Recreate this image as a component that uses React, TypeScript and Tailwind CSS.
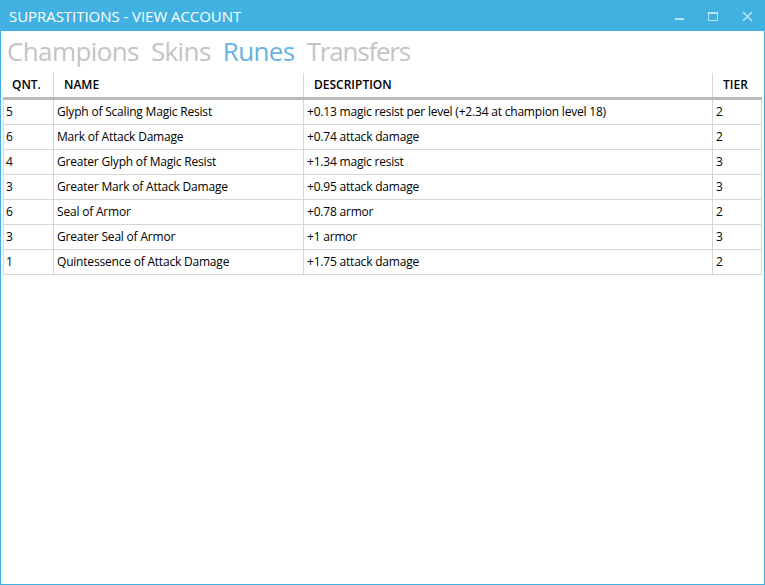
import React from "react";

const rows = [
  ["5", "Glyph of Scaling Magic Resist", "+0.13 magic resist per level (+2.34 at champion level 18)", "2"],
  ["6", "Mark of Attack Damage", "+0.74 attack damage", "2"],
  ["4", "Greater Glyph of Magic Resist", "+1.34 magic resist", "3"],
  ["3", "Greater Mark of Attack Damage", "+0.95 attack damage", "3"],
  ["6", "Seal of Armor", "+0.78 armor", "2"],
  ["3", "Greater Seal of Armor", "+1 armor", "3"],
  ["1", "Quintessence of Attack Damage", "+1.75 attack damage", "2"],
];

export default function App() {
  return (
    <div
      className="w-[765px] h-[585px] flex flex-col border border-[#41b1e1] bg-white overflow-hidden"
      style={{ fontFamily: '"Open Sans", "Noto Sans", sans-serif' }}
    >
      <div className="h-[30px] shrink-0 bg-[#41b1e1] flex items-center pl-[8px] text-white">
        <span className="text-[15px] tracking-[-0.05px] leading-none">SUPRASTITIONS - VIEW ACCOUNT</span>
        <div className="ml-auto flex items-center h-full">
          <div className="w-[34px] h-full flex items-center justify-center">
            <div className="w-[9px] h-[2px] bg-[#b9e2f5] mt-[6px]" />
          </div>
          <div className="w-[34px] h-full flex items-center justify-center">
            <div className="w-[10px] h-[9px] border border-[#b9e2f5] border-t-2" />
          </div>
          <div className="w-[34px] h-full flex items-center justify-center">
            <svg width="11" height="11" viewBox="0 0 11 11">
              <path d="M1 1 L10 10 M10 1 L1 10" stroke="#b9e2f5" strokeWidth="1.6" />
            </svg>
          </div>
        </div>
      </div>
      <div className="flex gap-[12px] pl-[6px] h-[41px] items-center text-[26px] leading-none tracking-[-0.6px] mt-[-1px]">
        <span className="text-[#c4c4c4]">Champions</span>
        <span className="text-[#c4c4c4]">Skins</span>
        <span className="text-[#66b3e3]">Runes</span>
        <span className="text-[#c4c4c4] tracking-[-1.2px]">Transfers</span>
      </div>
      <div className="px-[2px] pt-[2px] text-[12px] tracking-[-0.2px] text-black">
        <div className="w-[759px]">
          <div className="flex h-[27px] border-b-[3px] border-[#b9b9b9] font-semibold items-center tracking-normal">
            <div className="w-[50px] pl-[9px] h-full flex items-center">QNT.</div>
            <div className="w-[250px] pl-[10px] h-full flex items-center border-l border-[#d6d6d6]">NAME</div>
            <div className="w-[409px] pl-[10px] h-full flex items-center border-l border-[#d6d6d6]">DESCRIPTION</div>
            <div className="flex-1 pl-[10px] h-full flex items-center border-l border-[#d6d6d6]">TIER</div>
          </div>
          {rows.map((r, i) => (
            <div key={i} className="flex h-[25px] border-b border-l border-r border-[#d6d6d6] items-center">
              <div className="w-[49px] pl-[2px] h-full flex items-center">{r[0]}</div>
              <div className="w-[250px] pl-[3px] h-full flex items-center border-l border-[#d6d6d6]">{r[1]}</div>
              <div className="w-[409px] pl-[3px] h-full flex items-center border-l border-[#d6d6d6]">{r[2]}</div>
              <div className="flex-1 pl-[3px] h-full flex items-center border-l border-[#d6d6d6]">{r[3]}</div>
            </div>
          ))}
        </div>
      </div>
    </div>
  );
}
